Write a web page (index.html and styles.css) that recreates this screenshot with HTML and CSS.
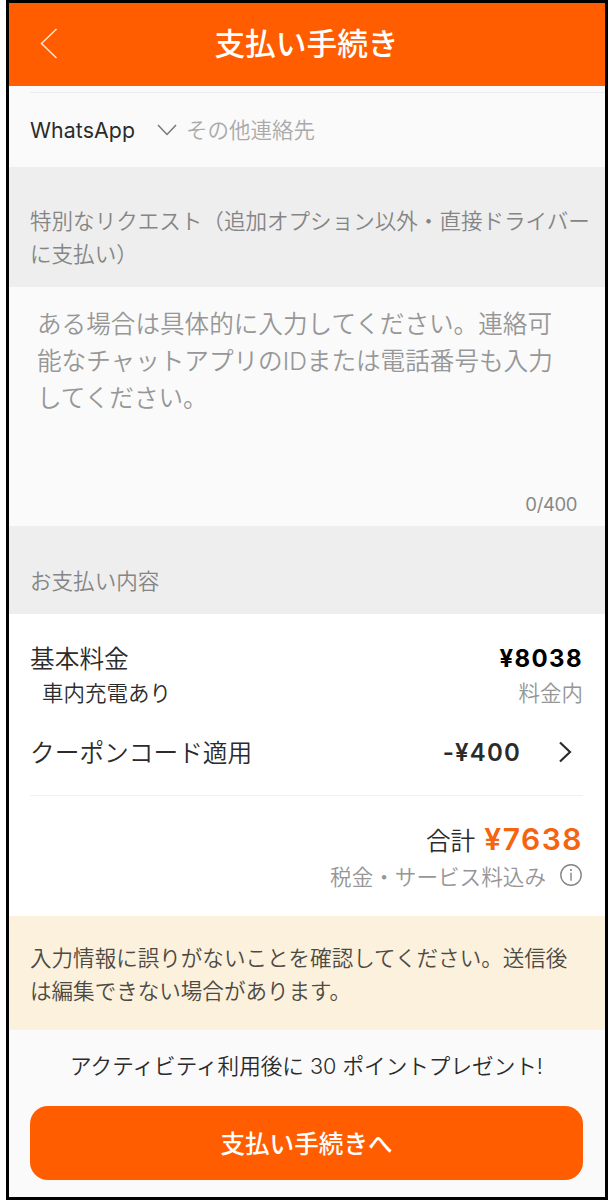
FILE: index.html
```
<!DOCTYPE html>
<html lang="ja">
<head>
    <meta charset="UTF-8">
    <meta name="viewport" content="width=device-width, initial-scale=1.0">
    <title>支払い手続き</title>
    <link rel="stylesheet" href="styles.css">
</head>
<body>
    <main class="phone">
        <header class="topbar">
            <svg class="back" width="18" height="32" viewBox="0 0 18 32"><path d="M16.5 1 L1.5 15.5 L16.5 30"/></svg>
            <h1>支払い手続き</h1>
        </header>
        <section class="contact">
            <div class="contact-row">
                <span class="app">WhatsApp</span>
                <svg class="down" width="20" height="12" viewBox="0 0 20 12"><path d="M1 1 L10 10.5 L19 1"/></svg>
                <span class="other">その他連絡先</span>
            </div>
        </section>
        <h2 class="band request">特別なリクエスト（追加オプション以外・直接ドライバー<br>に支払い）</h2>
        <section class="message">
            <p>ある場合は具体的に入力してください。連絡可<br>能なチャットアプリのIDまたは電話番号も入力<br>してください。</p>
            <div class="counter">0/400</div>
        </section>
        <h2 class="band payment">お支払い内容</h2>
        <section class="prices">
            <div class="row base">
                <span>基本料金</span>
                <span class="price">¥8038</span>
            </div>
            <div class="row detail">
                <span>車内充電あり</span>
                <span class="included">料金内</span>
            </div>
            <div class="row coupon">
                <span>クーポンコード適用</span>
                <span class="discount">-¥400</span>
                <svg class="next" width="14" height="22" viewBox="0 0 14 22"><path d="M2 1.5 L12 11 L2 20.5"/></svg>
            </div>
            <div class="total">
                <span>合計</span>
                <strong>¥7638</strong>
            </div>
            <div class="tax">
                <span>税金・サービス料込み</span>
                <svg class="info" width="22" height="22" viewBox="0 0 22 22">
                    <circle cx="11" cy="11" r="10.2"/>
                    <path d="M11 8.7 V16.8"/>
                    <circle class="dot" cx="11" cy="6" r="1.1"/>
                </svg>
            </div>
        </section>
        <p class="notice">入力情報に誤りがないことを確認してください。送信後<br>は編集できない場合があります。</p>
        <footer>
            <p>アクティビティ利用後に 30 ポイントプレゼント!</p>
            <button type="button">支払い手続きへ</button>
        </footer>
    </main>
</body>
</html>
```

FILE: styles.css
```
*{
    box-sizing: border-box;
}
body{
    margin: 0;
    background: #ffffff;
    color: #2b2b2b;
    font-family: Inter, "Noto Sans CJK JP", sans-serif;
    font-weight: 350;
}
h1, h2, p{
    margin: 0;
}
svg{
    display: block;
    flex: none;
    fill: none;
    stroke: currentColor;
}
.phone{
    width: 602px;
    height: 1200px;
    margin-left: 6px;
    border: 3px solid #000000;
    background: #fafafa;
    white-space: nowrap;
    overflow: hidden;
}
.topbar{
    height: 83px;
    padding: 0 32px 2px 31px;
    display: grid;
    grid-template-columns: 18px 1fr 18px;
    align-items: center;
    background: #ff5d00;
    color: #ffffff;
}
.back{
    stroke-width: 1.5;
    color: #ffe3cc;
}
.topbar h1{
    font-size: 30.7px;
    line-height: 40px;
    font-weight: 500;
    text-align: center;
}
.contact{
    height: 81px;
    padding: 6px 0 0 21px;
}
.contact-row{
    height: 75px;
    padding-bottom: 1px;
    display: flex;
    align-items: center;
    border-top: 1px solid #ebebef;
    font-size: 21.5px;
}
.app{
    width: 127px;
    font-size: 21.3px;
    letter-spacing: 0.1px;
    font-weight: 400;
}
.down{
    margin-right: 9px;
    color: #777777;
    stroke-width: 1.5;
}
.other{
    margin-top: -2px;
    color: #aaaaaa;
}
.band{
    padding: 0 21px;
    background: #eeeeee;
    color: #858585;
    font-size: 21.55px;
    font-weight: 350;
    line-height: 32.5px;
}
.request{
    height: 120px;
    padding-top: 38px;
}
.payment{
    height: 88px;
    padding-top: 39px;
}
.message{
    height: 239px;
    padding: 19px 28px 0;
    color: #979797;
}
.message p{
    height: 187px;
    font-size: 24.6px;
    line-height: 37px;
}
.counter{
    line-height: 22px;
    font-size: 18.5px;
    font-weight: 400;
    letter-spacing: -0.4px;
    text-align: right;
    color: #888888;
}
.prices{
    height: 302px;
    padding: 25px 22px 0 21px;
    background: #ffffff;
}
.row{
    display: flex;
    justify-content: space-between;
    align-items: center;
    font-size: 24.7px;
}
.base{
    height: 36px;
}
.price{
    margin-top: 3px;
    font-size: 24px;
    font-weight: 700;
    letter-spacing: 1.4px;
    color: #000000;
}
.detail{
    height: 33px;
    padding-left: 12px;
    font-size: 21.5px;
}
.included, .tax{
    color: #969696;
}
.coupon{
    height: 88px;
    padding: 0 11px 1px 0;
    border-bottom: 1px solid #f0f0f0;
}
.discount{
    margin: 3px 0 0 auto;
    font-size: 24px;
    font-weight: 600;
    letter-spacing: 1.2px;
}
.next{
    margin: 2px 0 0 37px;
    stroke-width: 2.2;
}
.total{
    height: 42px;
    margin-top: 22px;
    display: flex;
    justify-content: flex-end;
    align-items: center;
    gap: 9px;
    font-size: 24.7px;
}
.total strong{
    font-size: 30px;
    font-weight: 600;
    letter-spacing: 1.5px;
    color: #f5640f;
}
.tax{
    height: 30px;
    padding-right: 1px;
    display: flex;
    justify-content: flex-end;
    align-items: center;
    gap: 14px;
    font-size: 21.6px;
}
.info{
    stroke-width: 1.4;
    color: #858585;
}
.info .dot{
    fill: currentColor;
    stroke: none;
}
.notice{
    height: 114px;
    padding: 26px 21px 0;
    background: #fbf1dd;
    color: #4d4943;
    font-size: 21.55px;
    line-height: 33px;
}
footer{
    padding: 20px 22px 0 21px;
    text-align: center;
}
footer p{
    height: 56px;
    font-size: 21.6px;
    line-height: 32px;
}
button{
    display: block;
    width: 100%;
    height: 74px;
    padding: 0 0 2px;
    border: none;
    border-radius: 18px;
    background: #ff5d00;
    color: #ffffff;
    font-family: inherit;
    font-size: 24.6px;
    font-weight: 500;
}
```
